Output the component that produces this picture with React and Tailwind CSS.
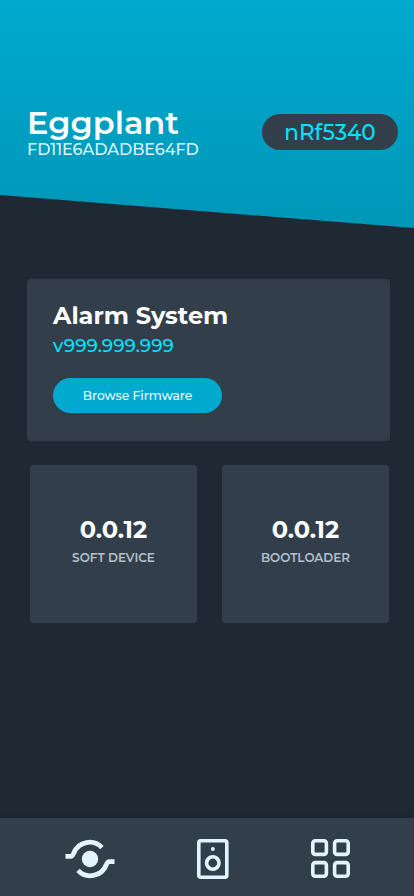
import React from "react";

const fontStack = "font-['Montserrat','Inter','Noto_Sans',sans-serif]";

function ConnectIcon() {
  return (
    <svg width="50" height="40" viewBox="0 0 50 40" fill="none" stroke="#e3f4ff" strokeWidth="4.8">
      <circle cx="25" cy="20" r="8.2" fill="#e3f4ff" stroke="none" />
      <path d="M0.5 17.4H5.5C7.2 17.4 8 16.2 8.8 14A17 17 0 0 1 37 8.6" />
      <path d="M49.5 22.6H44.5C42.8 22.6 42 23.8 41.2 26A17 17 0 0 1 13 31.4" />
    </svg>
  );
}

function SpeakerIcon() {
  return (
    <svg width="32" height="40" viewBox="0 0 32 40" fill="none" stroke="#e3f4ff" strokeWidth="3.6">
      <rect x="1.8" y="1.8" width="28" height="36.4" rx="2" />
      <circle cx="15.8" cy="24" r="6.2" />
      <circle cx="15.8" cy="10" r="2" fill="#e3f4ff" stroke="none" />
    </svg>
  );
}

function GridIcon() {
  return (
    <svg width="40" height="40" viewBox="0 0 40 40" fill="none" stroke="#e3f4ff" strokeWidth="3.6">
      <rect x="1.8" y="1.8" width="13.6" height="13.6" rx="2.5" />
      <rect x="23.6" y="1.8" width="13.6" height="13.6" rx="2.5" />
      <rect x="1.8" y="23.6" width="13.6" height="13.6" rx="2.5" />
      <rect x="23.6" y="23.6" width="13.6" height="13.6" rx="2.5" />
    </svg>
  );
}

function VersionCard({ version, label }) {
  return (
    <div className="h-[158px] rounded bg-[#323f4b] flex flex-col items-center pt-[50px]">
      <div className="text-[24px] leading-[30px] font-bold text-white">{version}</div>
      <div className="mt-[4px] text-[12px] leading-[18px] font-semibold text-[#b4c0cc]">{label}</div>
    </div>
  );
}

export default function App() {
  return (
    <div className={`${fontStack} h-[896px] w-[414px] overflow-hidden bg-[#1f2933] flex flex-col`}>
      {/* Header with slanted bottom edge */}
      <div className="h-[228px] shrink-0 bg-gradient-to-b from-[#00a9ce] to-[#0097b8] [clip-path:polygon(0_0,100%_0,100%_100%,0_195px)] pt-[104px] pl-[27px] pr-[16px] flex justify-between items-start">
        <div>
          <div className="text-[32px] leading-[38px] font-semibold text-white">Eggplant</div>
          <div className="text-[16px] leading-[15px] font-medium text-[#dff6fc]">FD11E6ADADBE64FD</div>
        </div>
        <div className="mt-[10px] h-[36px] w-[136px] rounded-full bg-[#323f4b] flex items-center justify-center text-[21.5px] font-medium text-[#00e5ff]">
          nRf5340
        </div>
      </div>

      {/* Firmware card */}
      <div className="mt-[51px] ml-[27px] mr-[24px] h-[162px] rounded bg-[#323f4b] pl-[26px] pt-[21px]">
        <div className="text-[24px] leading-[32px] font-bold text-white">Alarm System</div>
        <div className="mt-[1px] text-[18.4px] leading-[26px] font-medium text-[#00e5ff]">v999.999.999</div>
        <div className="mt-[19px] h-[35px] w-[169px] rounded-full bg-[#00a9ce] pt-[1px] flex items-center justify-center text-[12.3px] font-medium text-[#eafaff]">
          Browse Firmware
        </div>
      </div>

      {/* Version cards */}
      <div className="mt-[24px] ml-[30px] mr-[25px] grid grid-cols-2 gap-[25px]">
        <VersionCard version="0.0.12" label="SOFT DEVICE" />
        <VersionCard version="0.0.12" label="BOOTLOADER" />
      </div>

      {/* Bottom nav */}
      <div className="mt-auto h-[78px] bg-[#323f4b] shadow-[0_-2px_4px_rgba(0,0,0,0.15)] pt-[21px] pl-[65px] pr-[63px] flex justify-between items-start">
        <ConnectIcon />
        <SpeakerIcon />
        <GridIcon />
      </div>
    </div>
  );
}
